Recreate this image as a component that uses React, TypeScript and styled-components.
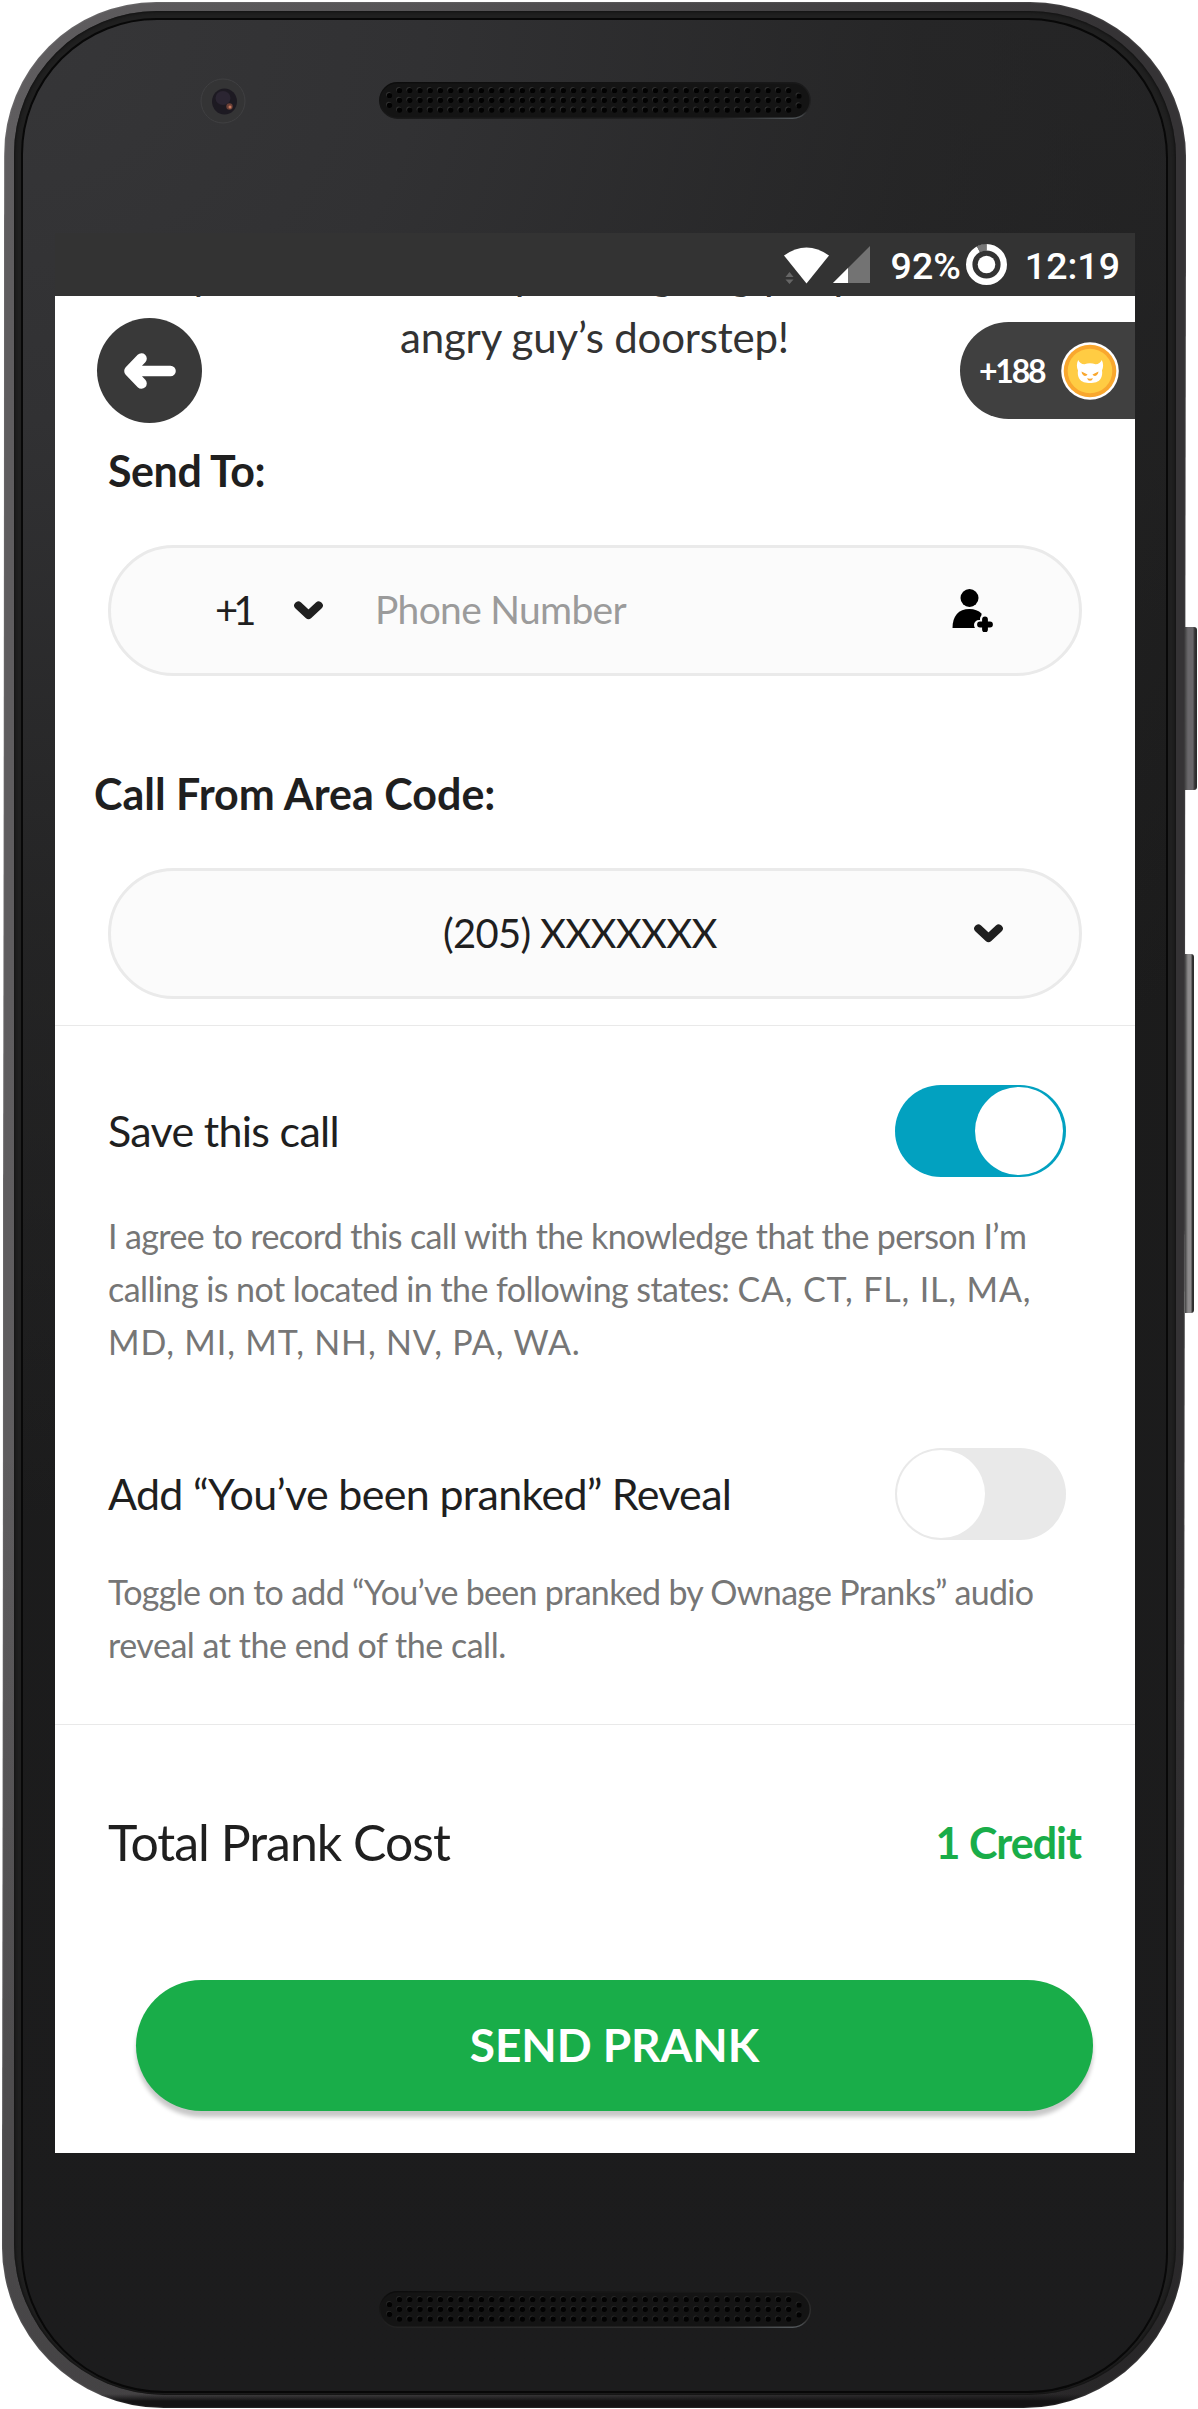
import React from 'react';
import styled, { createGlobalStyle } from 'styled-components';

const GlobalStyle = createGlobalStyle`
  *, *::before, *::after { box-sizing: border-box; }
  body { margin: 0; background: #fff; }
`;

/* ---------- device ---------- */

const Page = styled.div`
  position: relative;
  width: 1198px;
  height: 2409px;
  padding: 2px 0 0 3px;
  overflow: hidden;
  font-family: Lato, "Liberation Sans", sans-serif;
  color: #1f1f1f;
`;

const Body = styled.div`
  position: relative;
  width: 1182px;
  height: 2406px;
  padding: 9px 9px 13px 11px;

  &::before {
    content: "";
    position: absolute;
    inset: 0;
    border-radius: 152px 156px 160px 162px;
    transform: skewX(-0.06deg);
    background:
      linear-gradient(180deg, transparent 2392px, #141314 2399px),
      linear-gradient(180deg, rgba(0, 0, 0, 0) 60%, rgba(10, 10, 10, 0.3) 100%),
      linear-gradient(90deg, #5f5d5f 0, #565456 400px, #3a383a 1000px, #353335 1100px);
    box-shadow: inset 0 0 2px rgba(255, 255, 255, 0.25);
  }
`;

const Rim = styled.div`
  position: relative;
  height: 2384px;
  padding: 7px 8px 2px 7px;
  border-radius: 143px 147px 149px 151px;
  background: #202020;
  box-shadow: inset 0 0 3px 1px #111;
`;

const Glass = styled.div`
  height: 2375px;
  padding: 0 31px 0 32px;
  border: 2px solid #080808;
  border-radius: 136px 140px 140px 143px;
  background:
    radial-gradient(circle at 0 0, #363638 0, #313133 400px, rgba(40, 40, 41, 0.7) 900px, rgba(30, 30, 31, 0) 1500px),
    linear-gradient(180deg, #212122 0, #1b1b1b 600px, #1c1c1d 100%);
  display: flex;
  flex-direction: column;
`;

const TopBezel = styled.div`
  height: 213px;
  display: flex;
  align-items: flex-start;
  padding: 62px 0 0 145px;
  gap: 133px;
`;

const BottomBezel = styled.div`
  display: flex;
  padding: 138px 0 0 324px;
`;

const SpeakerIcon = styled.svg`
  width: 432px;
  height: 37px;
  flex: none;
`;

const CameraIcon = styled.svg`
  width: 46px;
  height: 46px;
  margin-top: -4px;
  flex: none;
`;

const SideButton = styled.div<{ $top: number; $width: number; $height: number; $shade: string }>`
  position: absolute;
  left: 1185px;
  top: ${p => p.$top}px;
  width: ${p => p.$width}px;
  height: ${p => p.$height}px;
  border-radius: 0 3px 3px 0;
  background: linear-gradient(90deg, #444 0, ${p => p.$shade} 3px, ${p => p.$shade} 65%, #333 82%, #2a2a2a 100%);
`;

/* ---------- screen ---------- */

const Screen = styled.main`
  position: relative;
  width: 1080px;
  height: 1920px;
  flex: none;
  overflow: hidden;
  background: #fff;
  display: flex;
  flex-direction: column;
`;

const StatusBar = styled.header`
  height: 63px;
  flex: none;
  background: #333;
  display: flex;
  align-items: center;
  justify-content: flex-end;
  padding: 0 15px 0 0;
  color: #fff;
`;

const StatusText = styled.span`
  font: 500 37.5px/62px Roboto, sans-serif;
  margin-top: 2px;
`;

const WifiIcon = styled.svg`
  width: 46px;
  height: 38px;
  margin: 1px 3px 0 0;
`;

const SignalIcon = styled.svg`
  width: 38px;
  height: 37px;
  margin: 0 21px 0 0;
`;

const BatteryIcon = styled.svg`
  width: 41px;
  height: 41px;
  margin: 0 18px 0 5px;
`;

const FloatingBar = styled.div`
  position: absolute;
  inset: 85px 0 auto 42px;
  display: flex;
  justify-content: space-between;
`;

const BackButton = styled.button`
  width: 105px;
  height: 105px;
  padding: 0;
  border: 0;
  border-radius: 50%;
  background: #393939;
  display: flex;
  align-items: center;
  justify-content: center;
`;

const CreditsPill = styled.div`
  width: 175px;
  height: 97px;
  margin-top: 4px;
  padding: 0 16px 0 19px;
  border-radius: 49px 0 0 49px;
  background: #404040;
  color: #fff;
  display: flex;
  align-items: center;
  justify-content: space-between;
`;

const Text = styled.span<{ $size: number; $spacing?: number; $bold?: boolean; $color?: string; $line?: number }>`
  display: block;
  font-size: ${p => p.$size}px;
  font-weight: ${p => (p.$bold ? 700 : 400)};
  letter-spacing: ${p => p.$spacing ?? 0}px;
  line-height: ${p => p.$line ?? 56}px;
  color: ${p => p.$color ?? 'inherit'};
  white-space: nowrap;
`;

const StateCodes = styled.span`
  letter-spacing: 0.85px;
`;

const Description = styled.div`
  height: 74px;
  flex: none;
  overflow: hidden;
  color: #333;
`;

const ScrolledLine = styled.div`
  height: 67px;
  margin-top: -55px;
  padding-left: 136px;
  display: flex;
  font-size: 42px;
  line-height: 67px;
`;

const Glyph = styled.span<{ $gap: number }>`
  margin-left: ${p => p.$gap}px;
`;

const LastLine = styled.div`
  margin-top: -4px;
  padding-left: 345px;
`;

const Heading = styled.h2<{ $top: number; $left: number }>`
  margin: ${p => p.$top}px 0 0 ${p => p.$left}px;
  font-size: inherit;
`;

const Field = styled.div`
  width: 974px;
  height: 131px;
  margin: 46px 0 0 53px;
  flex: none;
  border: 3px solid #eaeaea;
  border-radius: 66px;
  background: #fbfbfb;
  display: flex;
  align-items: center;
`;

const DialCode = styled.div`
  display: flex;
  align-items: center;
  width: 264px;
  padding-left: 104px;
  gap: 43px;
`;

const Grow = styled.div`
  flex: 1;
  padding-bottom: 3px;
`;

const AreaCode = styled.div`
  flex: 1;
  padding: 0 0 2px 332px;
`;

const ChevronSlot = styled.div`
  margin-right: 76px;
  display: flex;
`;

const PersonSlot = styled.div`
  margin: 0 86px 2px 0;
  display: flex;
`;

const Divider = styled.hr<{ $top: number }>`
  width: 100%;
  height: 1px;
  flex: none;
  margin: ${p => p.$top}px 0 0;
  border: 0;
  background: #e9e9e9;
`;

const Option = styled.section<{ $top: number }>`
  margin-top: ${p => p.$top}px;
  padding: 0 69px 0 53px;
`;

const OptionHead = styled.div`
  height: 92px;
  display: flex;
  align-items: center;
  justify-content: space-between;
`;

const OptionBody = styled.div<{ $top: number }>`
  padding-top: ${p => p.$top}px;
  color: #767676;
`;

const Toggle = styled.div<{ $on?: boolean }>`
  width: 171px;
  height: 92px;
  padding: 2px 3px 2px 2px;
  border-radius: 46px;
  background: ${p => (p.$on ? '#02a1c0' : '#e9e9e9')};
  display: flex;
  justify-content: ${p => (p.$on ? 'flex-end' : 'flex-start')};

  &::after {
    content: "";
    width: 88px;
    height: 88px;
    border-radius: 50%;
    background: #fff;
  }
`;

const CostRow = styled.div`
  margin-top: 87px;
  padding: 0 54px 0 53px;
  height: 60px;
  flex: none;
  display: flex;
  justify-content: space-between;
  align-items: flex-start;
`;

const SendButton = styled.button`
  width: 957px;
  height: 131px;
  margin: 108px 0 0 81px;
  flex: none;
  padding: 0 0 2px;
  border: 0;
  border-radius: 66px;
  background: #19ad49;
  color: #fff;
  font-family: inherit;
  display: flex;
  align-items: center;
  justify-content: center;
  box-shadow: 0 6px 4px rgba(0, 0, 0, 0.22);
`;

/* ---------- drawings ---------- */

const Speaker = ({ bottom = false }: { bottom?: boolean }) => {
  const holes: [number, number][] = [];
  for (let i = 0; i < 39; i++) for (let r = 0; r < 3; r++) holes.push([20.5 + i * 10.24, 8.5 + r * 9.8]);
  holes.push([10.5, 13.5], [10.5, 23.3], [420, 14], [420, 23.8]);
  return (
    <SpeakerIcon viewBox="0 0 432 37">
      <defs>
        <linearGradient id={bottom ? 'lipB' : 'lipT'} x1="0" y1="0" x2="1" y2="1">
          <stop offset="0" stopColor="#0c0c0c" />
          <stop offset="0.9" stopColor={bottom ? '#333' : '#242425'} />
          <stop offset="1" stopColor="#5a6064" />
        </linearGradient>
      </defs>
      <rect x="0.7" y="0.7" width="430.6" height="35.6" rx="17.8" fill="#141414" stroke={`url(#${bottom ? 'lipB' : 'lipT'})`} strokeWidth="1.4" />
      {holes.map(([x, y], i) => (
        <g key={i}>
          {!bottom && <circle cx={x - 0.8} cy={y - 0.9} r="2.6" fill="#2f2f2f" />}
          {bottom && <circle cx={x - 0.6} cy={y - 0.8} r="2.7" fill="#262626" />}
          <circle cx={x} cy={y} r="2.6" fill="#020202" />
        </g>
      ))}
    </SpeakerIcon>
  );
};

const Camera = () => (
  <CameraIcon viewBox="0 0 46 46">
    <circle cx="23" cy="23" r="22" fill="#343435" stroke="#404042" strokeWidth="1" />
    <ellipse cx="24.5" cy="23.5" rx="12.5" ry="13" fill="#1d1a22" />
    <ellipse cx="23" cy="20" rx="7.5" ry="7" fill="#2b2532" />
    <circle cx="29.5" cy="28.5" r="3.2" fill="#6a4038" />
    <circle cx="30" cy="29" r="1.5" fill="#c9785c" />
  </CameraIcon>
);

const Wifi = () => (
  <WifiIcon viewBox="0 0 46 38">
    <path d="M1 9.5Q23.5 -6.5 46 9.5L23.5 37.5Z" fill="#fff" />
    <path d="M2.5 31L6.5 26L10.5 31ZM2.5 33.500L6.5 38L10.5 33.500Z" fill="#666" />
  </WifiIcon>
);

const Signal = () => (
  <SignalIcon viewBox="0 0 38 37">
    <path d="M38 0V37H1Z" fill="#737373" />
    <path d="M16 22V37H1Z" fill="#fff" />
  </SignalIcon>
);

const Battery = () => (
  <BatteryIcon viewBox="0 0 41 41">
    <circle cx="20.5" cy="20.5" r="17.3" fill="none" stroke="#fff" strokeWidth="6.4" />
    <path d="M20.5 3.2A17.3 17.3 0 0 0 12.4 5.2" fill="none" stroke="#333" strokeWidth="6.8" />
    <path d="M20.5 3.2A17.3 17.3 0 0 0 12.4 5.2" fill="none" stroke="#777" strokeWidth="6.4" />
    <circle cx="20.5" cy="20.5" r="8.8" fill="#fff" />
  </BatteryIcon>
);

const BackArrow = () => (
  <svg width="54" height="38" viewBox="0 0 54 38">
    <path d="M18.5 6.5L6.5 19L18.5 31.5M8 19H47.5" fill="none" stroke="#fff" strokeWidth="10.6" strokeLinecap="round" strokeLinejoin="round" />
  </svg>
);

const Chevron = () => (
  <svg width="29" height="19" viewBox="0 0 29 19">
    <path d="M4.3 4.5L14.5 14L24.7 4.5" fill="none" stroke="#1f1f1f" strokeWidth="8.2" strokeLinecap="round" strokeLinejoin="round" />
  </svg>
);

const AddPerson = () => (
  <svg width="41" height="44" viewBox="0 0 41 44">
    <circle cx="17.5" cy="10" r="9" />
    <path d="M0.5 40C0.500 28 6.5 21 17.5 21C22.5 21 26.5 22.5 29.5 25.5V40Z" />
    <path d="M33 31V43M27 37H39" fill="none" stroke="#fbfbfb" strokeWidth="10" strokeLinecap="round" />
    <path d="M33 31.5V41.5M28 36.5H38" fill="none" stroke="#000" strokeWidth="5.8" strokeLinecap="round" />
  </svg>
);

const Coin = () => (
  <svg width="58" height="58" viewBox="0 0 58 58">
    <circle cx="29" cy="29" r="28.8" fill="#fff" />
    <circle cx="29" cy="29" r="26.3" fill="#f9a72e" />
    <circle cx="29" cy="29" r="22.3" fill="#ffcc43" />
    <path d="M17.2 18C15.4 21.5 15.6 25.5 17 28.5C16.5 31 16.8 34.5 18.5 37C20.5 40 24.5 41 29 41C33.5 41 37.5 40 39.5 37C41.2 34.5 41.5 31 41 28.5C42.4 25.5 42.6 21.5 40.8 18C39.6 20.8 37.3 22.3 34.5 22.2C31 20.9 27 20.9 23.5 22.2C20.7 22.3 18.4 20.8 17.2 18Z" fill="#fff" />
    <path d="M20.5 29.5L26.5 32.5C25.5 34.8 21 34.5 20.5 29.5ZM37.5 29.5L31.5 32.5C32.5 34.8 37 34.5 37.5 29.5ZM26 36.3Q29 37.2 32 36.3Q31 38.8 29 38.8Q27 38.8 26 36.3Z" fill="#f9a72e" />
  </svg>
);

export default function App() {
  return (
    <Page>
      <GlobalStyle />
      <SideButton $top={627} $width={12} $height={163} $shade="#69676a" />
      <SideButton $top={954} $width={9} $height={359} $shade="#8c8a8b" />
      <Body>
        <Rim>
          <Glass>
            <TopBezel>
              <Camera />
              <Speaker />
            </TopBezel>

            <Screen>
              <StatusBar>
                <Wifi />
                <Signal />
                <StatusText>92%</StatusText>
                <Battery />
                <StatusText>12:19</StatusText>
              </StatusBar>

              <Description>
                <ScrolledLine>
                  <Glyph $gap={0}>y</Glyph>
                  <Glyph $gap={302}>p</Glyph>
                  <Glyph $gap={113}>g</Glyph>
                  <Glyph $gap={57}>g</Glyph>
                  <Glyph $gap={12}>p</Glyph>
                  <Glyph $gap={46}>p</Glyph>
                </ScrolledLine>
                <LastLine>
                  <Text $size={42} $spacing={-0.2} $line={67}>angry guy’s doorstep!</Text>
                </LastLine>
              </Description>

              <Heading $top={73} $left={53}>
                <Text $size={43} $spacing={-0.45} $bold>Send To:</Text>
              </Heading>
              <Field>
                <DialCode>
                  <Text $size={40} $spacing={-5} $line={53}>+1</Text>
                  <Chevron />
                </DialCode>
                <Grow>
                  <Text $size={39} $spacing={-0.7} $color="#9b9b9b">Phone Number</Text>
                </Grow>
                <PersonSlot><AddPerson /></PersonSlot>
              </Field>

              <Heading $top={90} $left={39}>
                <Text $size={43} $bold>Call From Area Code:</Text>
              </Heading>
              <Field>
                <AreaCode>
                  <Text $size={40} $spacing={-0.7}>(205) XXXXXXX</Text>
                </AreaCode>
                <ChevronSlot><Chevron /></ChevronSlot>
              </Field>

              <Divider $top={26} />

              <Option $top={59}>
                <OptionHead>
                  <Text $size={43} $spacing={-0.7}>Save this call</Text>
                  <Toggle $on />
                </OptionHead>
                <OptionBody $top={32}>
                  <Text $size={34} $spacing={-0.62} $line={53}>I agree to record this call with the knowledge that the person I’m</Text>
                  <Text $size={34} $spacing={-0.56} $line={53}>
                    calling is not located in the following states: <StateCodes>CA, CT, FL, IL, MA,</StateCodes>
                  </Text>
                  <Text $size={34} $spacing={0.85} $line={53}>MD, MI, MT, NH, NV, PA, WA.</Text>
                </OptionBody>
              </Option>

              <Option $top={80}>
                <OptionHead>
                  <Text $size={43} $spacing={-0.68}>Add “You’ve been pranked” Reveal</Text>
                  <Toggle />
                </OptionHead>
                <OptionBody $top={25}>
                  <Text $size={34} $spacing={-0.69} $line={53}>Toggle on to add “You’ve been pranked by Ownage Pranks” audio</Text>
                  <Text $size={34} $spacing={-0.47} $line={53}>reveal at the end of the call.</Text>
                </OptionBody>
              </Option>

              <Divider $top={53} />

              <CostRow>
                <Text $size={50} $spacing={-1} $line={61}>Total Prank Cost</Text>
                <Text $size={43} $spacing={-1} $bold $line={62} $color="#19ad49">1 Credit</Text>
              </CostRow>

              <SendButton>
                <Text $size={46} $spacing={-0.1} $bold>SEND PRANK</Text>
              </SendButton>

              <FloatingBar>
                <BackButton aria-label="Back"><BackArrow /></BackButton>
                <CreditsPill>
                  <Text $size={32} $spacing={-2.2} $bold>+188</Text>
                  <Coin />
                </CreditsPill>
              </FloatingBar>
            </Screen>

            <BottomBezel>
              <Speaker bottom />
            </BottomBezel>
          </Glass>
        </Rim>
      </Body>
    </Page>
  );
}
